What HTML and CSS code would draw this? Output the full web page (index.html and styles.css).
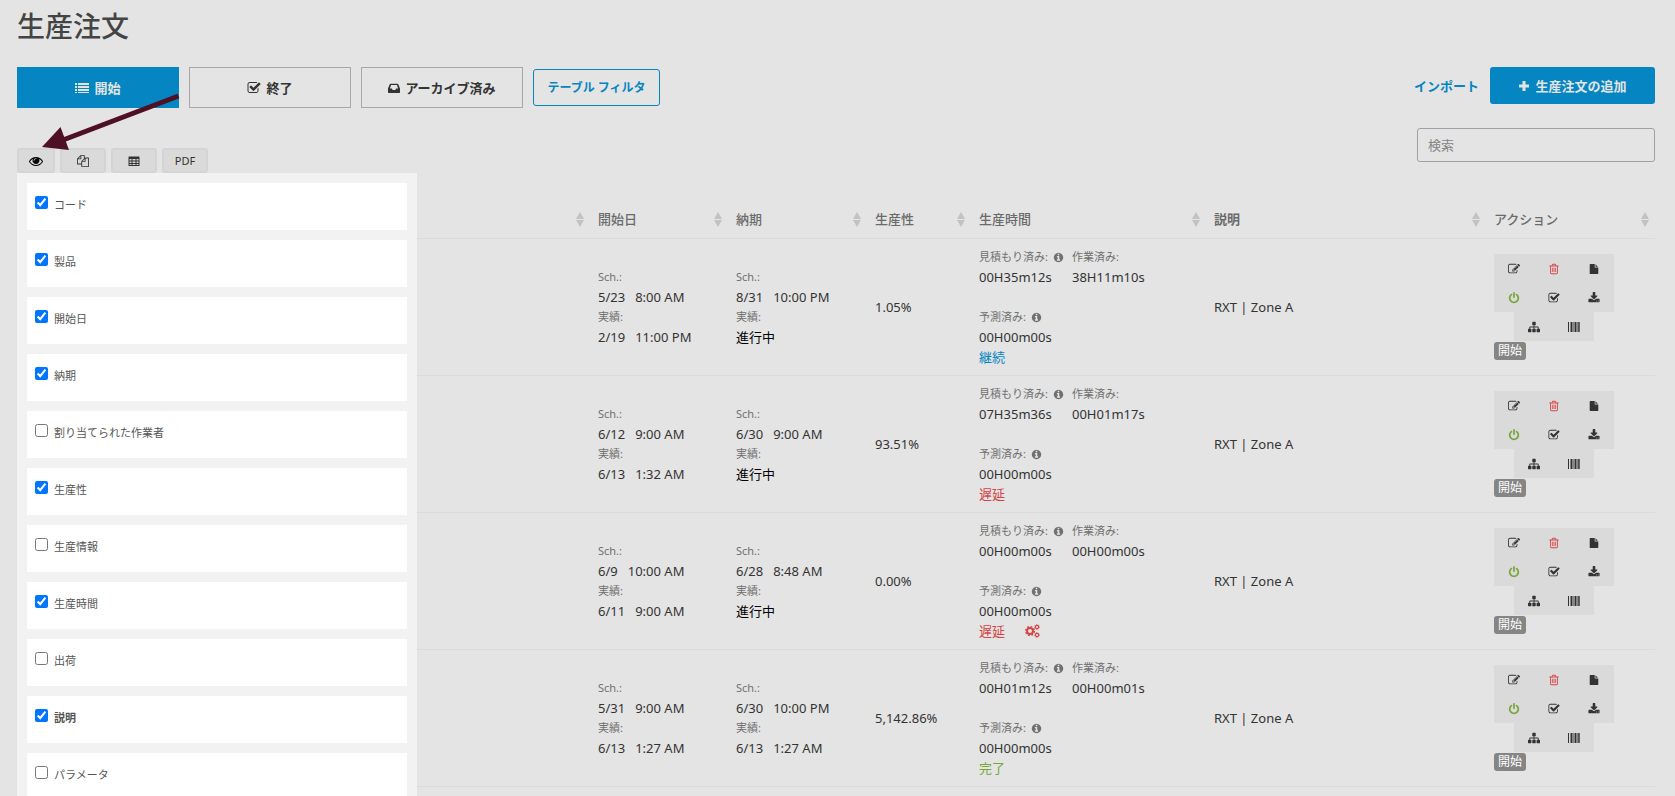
FILE: index.html
```html
<!DOCTYPE html>
<html lang="ja">
<head>
<meta charset="utf-8">
<meta name="viewport" content="width=device-width, initial-scale=1">
<title>生産注文</title>
<link rel="stylesheet" href="styles.css">
</head>
<body>
<svg class="sprite" aria-hidden="true">
  <symbol id="i-eye" viewBox="0 0 1792 1792"><path d="M1664 960q-152-236-381-353 61 104 61 225 0 185-131.5 316.5t-316.5 131.5-316.5-131.5-131.5-316.5q0-121 61-225-229 117-381 353 133 205 333.5 326.5t434.5 121.5 434.5-121.5 333.5-326.5zm-720-384q0-20-14-34t-34-14q-125 0-214.5 89.5t-89.5 214.5q0 20 14 34t34 14 34-14 14-34q0-86 61-147t147-61q20 0 34-14t14-34zm848 384q0 34-20 69-140 230-376.5 368.5t-499.5 138.5-499.5-139-376.5-368q-20-35-20-69t20-69q140-229 376.5-368t499.5-139 499.5 139 376.5 368q20 35 20 69z"/></symbol>
  <symbol id="i-check" viewBox="0 0 1792 1792"><path d="M1472 930v318q0 119-84.5 203.5t-203.5 84.5h-832q-119 0-203.5-84.5t-84.5-203.5v-832q0-119 84.5-203.5t203.5-84.5h832q63 0 117 25 15 7 18 23 3 17-9 29l-49 49q-10 10-23 10-3 0-9-2-23-6-45-6h-832q-66 0-113 47t-47 113v832q0 66 47 113t113 47h832q66 0 113-47t47-113v-254q0-13 9-22l64-64q10-10 23-10 6 0 12 3 20 8 20 29zm231-489l-814 814q-24 24-57 24t-57-24l-430-430q-24-24-24-57t24-57l110-110q24-24 57-24t57 24l263 263 647-647q24-24 57-24t57 24l110 110q24 24 24 57t-24 57z"/></symbol>
  <symbol id="i-edit" viewBox="0 0 1792 1792"><path d="M888 1184l116-116-152-152-116 116v56h96v96h56zm440-720q-16-16-33 1l-350 350q-17 17-1 33t33-1l350-350q17-17 1-33zm80 594v190q0 119-84.5 203.5t-203.5 84.5h-832q-119 0-203.5-84.5t-84.5-203.5v-832q0-119 84.5-203.5t203.5-84.5h832q63 0 117 25 15 7 18 23 3 17-9 29l-49 49q-14 14-32 8-23-6-45-6h-832q-66 0-113 47t-47 113v832q0 66 47 113t113 47h832q66 0 113-47t47-113v-126q0-13 9-22l64-64q15-15 35-7t20 29zm-96-738l288 288-672 672h-288v-288zm444 132l-92 92-288-288 92-92q28-28 68-28t68 28l152 152q28 28 28 68t-28 68z"/></symbol>
  <symbol id="i-trash" viewBox="0 0 1792 1792"><path d="M704 736v576q0 14-9 23t-23 9h-64q-14 0-23-9t-9-23v-576q0-14 9-23t23-9h64q14 0 23 9t9 23zm256 0v576q0 14-9 23t-23 9h-64q-14 0-23-9t-9-23v-576q0-14 9-23t23-9h64q14 0 23 9t9 23zm256 0v576q0 14-9 23t-23 9h-64q-14 0-23-9t-9-23v-576q0-14 9-23t23-9h64q14 0 23 9t9 23zm128 724v-948h-896v948q0 22 7 40.5t14.5 27 10.5 8.5h832q3 0 10.5-8.5t14.5-27 7-40.5zm-672-1076h448l-48-117q-7-9-17-11h-317q-10 2-17 11zm928 32v64q0 14-9 23t-23 9h-96v948q0 83-47 143.5t-113 60.5h-832q-66 0-113-58.5t-47-141.5v-952h-96q-14 0-23-9t-9-23v-64q0-14 9-23t23-9h309l70-167q15-37 54-63t79-26h320q40 0 79 26t54 63l70 167h309q14 0 23 9t9 23z"/></symbol>
  <symbol id="i-file" viewBox="0 0 1792 1792"><path d="M1152 512v-472q22 14 36 28l408 408q14 14 28 36h-472zm-128 32q0 40 28 68t68 28h544v1056q0 40-28 68t-68 28h-1344q-40 0-68-28t-28-68v-1600q0-40 28-68t68-28h800v544z"/></symbol>
  <symbol id="i-power" viewBox="0 0 1792 1792"><path d="M1664 896q0 156-61 298t-164 245-245 164-298 61-298-61-245-164-164-245-61-298q0-182 80.5-343t226.5-270q43-32 95.5-25t83.5 50q32 42 24.5 94.5t-49.5 84.5q-98 74-151.5 181t-53.5 228q0 104 40.5 198.5t109.5 163.5 163.5 109.5 198.5 40.5 198.5-40.5 163.5-109.5 109.5-163.5 40.5-198.5q0-121-53.5-228t-151.5-181q-42-32-49.5-84.5t24.5-94.5q31-43 84-50t95 25q146 109 226.5 270t80.5 343zm-640-768v640q0 52-38 90t-90 38-90-38-38-90v-640q0-52 38-90t90-38 90 38 38 90z"/></symbol>
  <symbol id="i-download" viewBox="0 0 1792 1792"><path d="M1344 1344q0-26-19-45t-45-19-45 19-19 45 19 45 45 19 45-19 19-45zm256 0q0-26-19-45t-45-19-45 19-19 45 19 45 45 19 45-19 19-45zm128-224v320q0 40-28 68t-68 28h-1472q-40 0-68-28t-28-68v-320q0-40 28-68t68-28h465l135 136q58 56 136 56t136-56l136-136h464q40 0 68 28t28 68zm-325-569q17 41-14 70l-448 448q-18 19-45 19t-45-19l-448-448q-31-29-14-70 17-39 59-39h256v-448q0-26 19-45t45-19h256q26 0 45 19t19 45v448h256q42 0 59 39z"/></symbol>
  <symbol id="i-tree" viewBox="0 0 1792 1792"><path d="M1792 1248v320q0 40-28 68t-68 28h-320q-40 0-68-28t-28-68v-320q0-40 28-68t68-28h96v-192h-512v192h96q40 0 68 28t28 68v320q0 40-28 68t-68 28h-320q-40 0-68-28t-28-68v-320q0-40 28-68t68-28h96v-192h-512v192h96q40 0 68 28t28 68v320q0 40-28 68t-68 28h-320q-40 0-68-28t-28-68v-320q0-40 28-68t68-28h96v-192q0-52 38-90t90-38h512v-192h-96q-40 0-68-28t-28-68v-320q0-40 28-68t68-28h320q40 0 68 28t28 68v320q0 40-28 68t-68 28h-96v192h512q52 0 90 38t38 90v192h96q40 0 68 28t28 68z"/></symbol>
  <symbol id="i-info" viewBox="0 0 1792 1792"><path d="M1152 1376v-160q0-14-9-23t-23-9h-96v-512q0-14-9-23t-23-9h-320q-14 0-23 9t-9 23v160q0 14 9 23t23 9h96v320h-96q-14 0-23 9t-9 23v160q0 14 9 23t23 9h448q14 0 23-9t9-23zm-128-896v-160q0-14-9-23t-23-9h-192q-14 0-23 9t-9 23v160q0 14 9 23t23 9h192q14 0 23-9t9-23zm640 416q0 209-103 385.5t-279.5 279.5-385.5 103-385.5-103-279.5-279.5-103-385.5 103-385.5 279.5-279.5 385.5-103 385.5 103 279.5 279.5 103 385.5z"/></symbol>
  <symbol id="i-copy" viewBox="0 0 1792 1792"><path d="M1696 384q40 0 68 28t28 68v1216q0 40-28 68t-68 28h-960q-40 0-68-28t-28-68v-288h-544q-40 0-68-28t-28-68v-672q0-40 20-88t48-76l408-408q28-28 76-48t88-20h416q40 0 68 28t28 68v328q68-40 128-40h416zm-544 213l-299 299h299v-299zm-640-384l-299 299h299v-299zm196 647l316-316v-416h-384v416q0 40-28 68t-68 28h-416v640h512v-256q0-40 20-88t48-76zm956 804v-1152h-384v416q0 40-28 68t-68 28h-416v640h896z"/></symbol>
  <symbol id="i-list" viewBox="0 0 14 14"><path d="M0 2h2v2H0zM3 2h11v2H3zM0 5h2v2H0zM3 5h11v2H3zM0 8h2v2H0zM3 8h11v2H3zM0 11h2v1H0zM3 11h11v1H3z"/></symbol>
  <symbol id="i-inbox" viewBox="0 0 14 14"><path fill-rule="evenodd" d="M3 2h8q.7 0 1 .7L14 7.500V12q0 .8-.8.800H.8Q0 12.800 0 12V7.500L2 2.700Q2.300 2 3 2zm.6 1.600L2.200 7.500h2.300l1 1.900h3l1-1.900h2.300l-1.400-3.900z"/></symbol>
  <symbol id="i-plus" viewBox="0 0 12 12"><path d="M4.500 1h3v3.500H11v3H7.500V11h-3V7.500H1v-3h3.500z"/></symbol>
  <symbol id="i-grid" viewBox="0 0 12 12"><path fill-rule="evenodd" d="M1 1.500h10q.5 0 .5.500v8.500q0 .5-.5.500H1q-.5 0-.5-.5V2q0-.5.500-.5zM1.500 4v1.500h2V4zm3 0v1.500h3V4zm4 0v1.500h2V4zm-7 2.500V8h2V6.500zm3 0V8h3V6.500zm4 0V8h2V6.500zM1.500 9v1h2V9zm3 0v1h3V9zm4 0v1h2V9z"/></symbol>
  <symbol id="i-barcode" viewBox="0 0 12 10"><path d="M0 0h1v10H0zM2 0h.5v10H2zM3 0h1v10H3zM4.500 0h1v10h-1zM6 0h.5v10H6zM7 0h1.500v10H7zM9 0h.5v10H9zM10 0h.8v10H10zM11.300 0h.7v10h-.7z"/></symbol>
  <symbol id="i-cogs" viewBox="0 0 15 14"><g fill="none" stroke="currentColor"><circle cx="5" cy="7" r="3" stroke-width="2"/><circle cx="5" cy="7" r="4.400" stroke-width="1.400" stroke-dasharray="1.730 1.730"/><circle cx="12" cy="3" r="1.600" stroke-width="1.100"/><circle cx="12" cy="3" r="2.400" stroke-width=".8" stroke-dasharray=".940 .940"/><circle cx="12" cy="11" r="1.600" stroke-width="1.100"/><circle cx="12" cy="11" r="2.400" stroke-width=".8" stroke-dasharray=".940 .940"/></g></symbol>
  <symbol id="i-sort" viewBox="0 0 8 15"><path d="M4 0l4 7H0zM0 8h8l-4 7z"/></symbol>
</svg>

<main class="page">
  <h1 class="title">生産注文</h1>

  <div class="topbar">
    <div class="tabs">
      <button class="tab tab-active" type="button"><svg class="icon icon-14"><use href="#i-list"/></svg>開始</button>
      <button class="tab" type="button"><svg class="icon icon-14"><use href="#i-check"/></svg>終了</button>
      <button class="tab" type="button"><svg class="icon icon-12"><use href="#i-inbox"/></svg>アーカイブ済み</button>
      <button class="filter" type="button">テーブル フィルタ</button>
    </div>
    <div class="primary">
      <a class="import" href="#">インポート</a>
      <button class="add" type="button"><svg class="icon icon-12"><use href="#i-plus"/></svg>生産注文の追加</button>
    </div>
  </div>

  <div class="toolbar">
    <div class="exports">
      <button class="tool tool-eye" type="button" aria-label="列の表示"><svg class="icon icon-14"><use href="#i-eye"/></svg></button>
      <button class="tool" type="button" aria-label="コピー"><svg class="icon icon-12"><use href="#i-copy"/></svg></button>
      <button class="tool" type="button" aria-label="表"><svg class="icon icon-12"><use href="#i-grid"/></svg></button>
      <button class="tool" type="button">PDF</button>
      <div class="columns">
        <label class="column"><input type="checkbox" checked><span>コード</span></label>
        <label class="column"><input type="checkbox" checked><span>製品</span></label>
        <label class="column"><input type="checkbox" checked><span>開始日</span></label>
        <label class="column"><input type="checkbox" checked><span>納期</span></label>
        <label class="column"><input type="checkbox"><span>割り当てられた作業者</span></label>
        <label class="column"><input type="checkbox" checked><span>生産性</span></label>
        <label class="column"><input type="checkbox"><span>生産情報</span></label>
        <label class="column"><input type="checkbox" checked><span>生産時間</span></label>
        <label class="column"><input type="checkbox"><span>出荷</span></label>
        <label class="column"><input type="checkbox" checked><span class="strong">説明</span></label>
        <label class="column"><input type="checkbox"><span>パラメータ</span></label>
      </div>
      <svg class="arrow" viewBox="0 0 140 58" aria-hidden="true"><path d="M137.500 3L22 47" stroke="#4d1025" stroke-width="5" fill="none"/><path d="M1 54L19.500 34l8.500 23z" fill="#4d1025"/></svg>
    </div>
    <input class="search" type="search" placeholder="検索" aria-label="検索">
  </div>

  <table class="orders">
    <colgroup><col><col class="c-start"><col class="c-due"><col class="c-rate"><col class="c-time"><col class="c-desc"><col class="c-act"></colgroup>
    <thead>
      <tr>
        <th><div class="head"><span></span><svg class="sort"><use href="#i-sort"/></svg></div></th>
        <th><div class="head"><span>開始日</span><svg class="sort"><use href="#i-sort"/></svg></div></th>
        <th><div class="head"><span>納期</span><svg class="sort"><use href="#i-sort"/></svg></div></th>
        <th><div class="head"><span>生産性</span><svg class="sort"><use href="#i-sort"/></svg></div></th>
        <th><div class="head"><span>生産時間</span><svg class="sort"><use href="#i-sort"/></svg></div></th>
        <th><div class="head"><span class="strong">説明</span><svg class="sort"><use href="#i-sort"/></svg></div></th>
        <th><div class="head head-last"><span>アクション</span><svg class="sort"><use href="#i-sort"/></svg></div></th>
      </tr>
    </thead>
    <tbody>
      <tr>
        <td></td>
        <td><div class="note">Sch.:</div><div class="when"><span>5/23</span><span>8:00 AM</span></div><div class="note">実績:</div><div class="when"><span>2/19</span><span>11:00 PM</span></div></td>
        <td><div class="note">Sch.:</div><div class="when"><span>8/31</span><span>10:00 PM</span></div><div class="note">実績:</div><div class="progress">進行中</div></td>
        <td>1.05%</td>
        <td>
          <div class="times">
            <div><div class="note">見積もり済み: <svg class="icon info"><use href="#i-info"/></svg></div><div>00H35m12s</div></div>
            <div><div class="note">作業済み:</div><div>38H11m10s</div></div>
          </div>
          <div class="note">予測済み: <svg class="icon info"><use href="#i-info"/></svg></div><div>00H00m00s</div>
          <div class="state blue">継続</div>
        </td>
        <td>RXT | Zone A</td>
        <td>
          <div class="actions">
            <button type="button" aria-label="編集"><svg class="icon icon-12"><use href="#i-edit"/></svg></button><button class="red" type="button" aria-label="削除"><svg class="icon icon-12"><use href="#i-trash"/></svg></button><button type="button" aria-label="書類"><svg class="icon icon-10"><use href="#i-file"/></svg></button><button class="green" type="button" aria-label="電源"><svg class="icon icon-12"><use href="#i-power"/></svg></button><button type="button" aria-label="完了"><svg class="icon icon-12"><use href="#i-check"/></svg></button><button type="button" aria-label="ダウンロード"><svg class="icon icon-12"><use href="#i-download"/></svg></button><button type="button" aria-label="構成"><svg class="icon icon-12"><use href="#i-tree"/></svg></button><button type="button" aria-label="バーコード"><svg class="icon icon-12"><use href="#i-barcode"/></svg></button>
          </div>
          <span class="badge">開始</span>
        </td>
      </tr>
      <tr>
        <td></td>
        <td><div class="note">Sch.:</div><div class="when"><span>6/12</span><span>9:00 AM</span></div><div class="note">実績:</div><div class="when"><span>6/13</span><span>1:32 AM</span></div></td>
        <td><div class="note">Sch.:</div><div class="when"><span>6/30</span><span>9:00 AM</span></div><div class="note">実績:</div><div class="progress">進行中</div></td>
        <td>93.51%</td>
        <td>
          <div class="times">
            <div><div class="note">見積もり済み: <svg class="icon info"><use href="#i-info"/></svg></div><div>07H35m36s</div></div>
            <div><div class="note">作業済み:</div><div>00H01m17s</div></div>
          </div>
          <div class="note">予測済み: <svg class="icon info"><use href="#i-info"/></svg></div><div>00H00m00s</div>
          <div class="state red">遅延</div>
        </td>
        <td>RXT | Zone A</td>
        <td>
          <div class="actions">
            <button type="button" aria-label="編集"><svg class="icon icon-12"><use href="#i-edit"/></svg></button><button class="red" type="button" aria-label="削除"><svg class="icon icon-12"><use href="#i-trash"/></svg></button><button type="button" aria-label="書類"><svg class="icon icon-10"><use href="#i-file"/></svg></button><button class="green" type="button" aria-label="電源"><svg class="icon icon-12"><use href="#i-power"/></svg></button><button type="button" aria-label="完了"><svg class="icon icon-12"><use href="#i-check"/></svg></button><button type="button" aria-label="ダウンロード"><svg class="icon icon-12"><use href="#i-download"/></svg></button><button type="button" aria-label="構成"><svg class="icon icon-12"><use href="#i-tree"/></svg></button><button type="button" aria-label="バーコード"><svg class="icon icon-12"><use href="#i-barcode"/></svg></button>
          </div>
          <span class="badge">開始</span>
        </td>
      </tr>
      <tr>
        <td></td>
        <td><div class="note">Sch.:</div><div class="when"><span>6/9</span><span>10:00 AM</span></div><div class="note">実績:</div><div class="when"><span>6/11</span><span>9:00 AM</span></div></td>
        <td><div class="note">Sch.:</div><div class="when"><span>6/28</span><span>8:48 AM</span></div><div class="note">実績:</div><div class="progress">進行中</div></td>
        <td>0.00%</td>
        <td>
          <div class="times">
            <div><div class="note">見積もり済み: <svg class="icon info"><use href="#i-info"/></svg></div><div>00H00m00s</div></div>
            <div><div class="note">作業済み:</div><div>00H00m00s</div></div>
          </div>
          <div class="note">予測済み: <svg class="icon info"><use href="#i-info"/></svg></div><div>00H00m00s</div>
          <div class="state red">遅延<svg class="icon cogs"><use href="#i-cogs"/></svg></div>
        </td>
        <td>RXT | Zone A</td>
        <td>
          <div class="actions">
            <button type="button" aria-label="編集"><svg class="icon icon-12"><use href="#i-edit"/></svg></button><button class="red" type="button" aria-label="削除"><svg class="icon icon-12"><use href="#i-trash"/></svg></button><button type="button" aria-label="書類"><svg class="icon icon-10"><use href="#i-file"/></svg></button><button class="green" type="button" aria-label="電源"><svg class="icon icon-12"><use href="#i-power"/></svg></button><button type="button" aria-label="完了"><svg class="icon icon-12"><use href="#i-check"/></svg></button><button type="button" aria-label="ダウンロード"><svg class="icon icon-12"><use href="#i-download"/></svg></button><button type="button" aria-label="構成"><svg class="icon icon-12"><use href="#i-tree"/></svg></button><button type="button" aria-label="バーコード"><svg class="icon icon-12"><use href="#i-barcode"/></svg></button>
          </div>
          <span class="badge">開始</span>
        </td>
      </tr>
      <tr>
        <td></td>
        <td><div class="note">Sch.:</div><div class="when"><span>5/31</span><span>9:00 AM</span></div><div class="note">実績:</div><div class="when"><span>6/13</span><span>1:27 AM</span></div></td>
        <td><div class="note">Sch.:</div><div class="when"><span>6/30</span><span>10:00 PM</span></div><div class="note">実績:</div><div class="when"><span>6/13</span><span>1:27 AM</span></div></td>
        <td>5,142.86%</td>
        <td>
          <div class="times">
            <div><div class="note">見積もり済み: <svg class="icon info"><use href="#i-info"/></svg></div><div>00H01m12s</div></div>
            <div><div class="note">作業済み:</div><div>00H00m01s</div></div>
          </div>
          <div class="note">予測済み: <svg class="icon info"><use href="#i-info"/></svg></div><div>00H00m00s</div>
          <div class="state green">完了</div>
        </td>
        <td>RXT | Zone A</td>
        <td>
          <div class="actions">
            <button type="button" aria-label="編集"><svg class="icon icon-12"><use href="#i-edit"/></svg></button><button class="red" type="button" aria-label="削除"><svg class="icon icon-12"><use href="#i-trash"/></svg></button><button type="button" aria-label="書類"><svg class="icon icon-10"><use href="#i-file"/></svg></button><button class="green" type="button" aria-label="電源"><svg class="icon icon-12"><use href="#i-power"/></svg></button><button type="button" aria-label="完了"><svg class="icon icon-12"><use href="#i-check"/></svg></button><button type="button" aria-label="ダウンロード"><svg class="icon icon-12"><use href="#i-download"/></svg></button><button type="button" aria-label="構成"><svg class="icon icon-12"><use href="#i-tree"/></svg></button><button type="button" aria-label="バーコード"><svg class="icon icon-12"><use href="#i-barcode"/></svg></button>
          </div>
          <span class="badge">開始</span>
        </td>
      </tr>
    </tbody>
  </table>
</main>
</body>
</html>
```
FILE: styles.css
```css
* { box-sizing: border-box; }

body {
  margin: 0;
  background: #e4e4e4;
  color: #333;
  font: 13px/20px "Noto Sans", "Noto Sans CJK JP", sans-serif;
}

button, input { font: inherit; color: inherit; }
button { margin: 0; cursor: pointer; }

.sprite { display: none; }

.icon { flex: none; fill: currentColor; }
.icon-14 { width: 14px; height: 14px; }
.icon-12 { width: 12px; height: 12px; }
.icon-10 { width: 10px; height: 10px; }

.page {
  height: 100vh;
  overflow: hidden;
  padding: 8px 20px 0 17px;
}

.title {
  margin: 0 0 23px;
  font-size: 28px;
  line-height: 36px;
  font-weight: 500;
  color: #444;
}

/* Status tabs and main actions */
.topbar {
  display: flex;
  justify-content: space-between;
  align-items: flex-start;
  margin-bottom: 20px;
}

.tabs { display: flex; align-items: center; gap: 10px; }

.tab, .filter, .add {
  display: flex;
  align-items: center;
  justify-content: center;
  gap: 5px;
  padding: 0;
  font-weight: 700;
}

.tab {
  width: 162px;
  height: 41px;
  border: 1px solid #a8a8a8;
  background: none;
}

.tab-active { border-color: #0586c2; background: #0586c2; color: #e4e4e4; }

.filter {
  width: 127px;
  height: 37px;
  border: 1px solid #0586c2;
  border-radius: 3px;
  background: none;
  color: #0586c2;
  font-size: 12px;
}

.primary { display: flex; align-items: center; gap: 11px; }
.import { color: #0586c2; font-weight: 700; text-decoration: none; }

.add {
  width: 165px;
  height: 37px;
  border: 0;
  border-radius: 3px;
  background: #0586c2;
  color: #e4e4e4;
}

/* Export buttons and search */
.toolbar {
  display: flex;
  justify-content: space-between;
  align-items: flex-start;
  margin-bottom: 27px;
}

.exports {
  position: relative;
  display: flex;
  gap: 5px;
  padding-top: 20px;
}

.tool {
  display: flex;
  align-items: center;
  justify-content: center;
  width: 46px;
  height: 25px;
  padding: 0;
  border: 2px solid #d4d4d4;
  border-radius: 3px;
  background: #dadada;
  font-size: 11px;
}

.tool-eye { width: 38px; color: #000; }

.search {
  width: 238px;
  height: 34px;
  padding: 0 10px;
  border: 1px solid #a0a0a8;
  border-radius: 3px;
  background: none;
}

.search::placeholder { color: #858585; }

/* Column visibility menu */
.columns {
  position: absolute;
  z-index: 1;
  top: 100%;
  left: 0;
  display: flex;
  flex-direction: column;
  gap: 10px;
  width: 400px;
  padding: 10px;
  background: #f2f2f2;
}

.column {
  display: flex;
  align-items: flex-start;
  gap: 6px;
  height: 47px;
  padding: 13px 8px 0;
  background: #fff;
  color: #555;
  font-size: 11px;
  line-height: 18px;
}

.column input { width: 13px; height: 13px; margin: 0; accent-color: #0075ff; }

.strong { font-weight: 700; }

.arrow {
  position: absolute;
  z-index: 2;
  left: 24px;
  bottom: 22px;
  width: 140px;
  height: 58px;
  pointer-events: none;
}

/* Orders table */
.orders { width: 100%; border-collapse: collapse; table-layout: fixed; }
.c-start { width: 138px; }
.c-due { width: 139px; }
.c-rate { width: 104px; }
.c-time { width: 235px; }
.c-desc { width: 280px; }
.c-act { width: 171px; }

th, td { border-bottom: 1px solid #dadada; text-align: left; }
th { padding: 9px 4px 9px 10px; color: #6b6b6b; font-weight: 500; }
td { padding: 8px 0 8px 10px; }

.head { display: flex; align-items: center; justify-content: space-between; }
.head-last { padding-right: 2px; }
.sort { flex: none; width: 8px; height: 15px; fill: #c2c2c2; }

.note {
  display: flex;
  align-items: center;
  gap: 5px;
  height: 20px;
  color: #707070;
  font-size: 11px;
  white-space: nowrap;
}

.info { width: 11px; height: 11px; }
.when { display: flex; gap: 10px; }
.progress { color: #000; }
.times { display: grid; grid-template-columns: 93px 1fr; padding-bottom: 20px; }
.state { display: flex; align-items: center; gap: 20px; }
.cogs { width: 15px; height: 14px; }

.blue { color: #0586c2; }
.red { color: #d64545; }
.green { color: #79a63a; }

.actions {
  display: flex;
  flex-wrap: wrap;
  justify-content: center;
  width: 120px;
}

.actions button {
  display: flex;
  align-items: center;
  justify-content: center;
  width: 40px;
  height: 29px;
  padding: 0;
  border: 0;
  background: #dadada;
}

.actions .red { color: #d64545; }
.actions .green { color: #79a63a; }

.badge {
  display: block;
  width: 32px;
  margin-top: 1px;
  border-radius: 3px;
  background: #858585;
  color: #fff;
  font-size: 12px;
  line-height: 18px;
  text-align: center;
}
```
